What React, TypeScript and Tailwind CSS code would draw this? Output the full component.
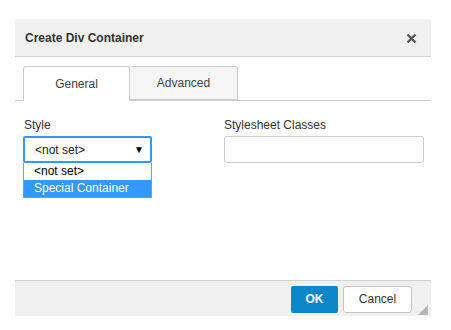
const font = { fontFamily: '"Liberation Sans", Arial, sans-serif' };

const App = () => {
  return (
    <div className="w-[451px] h-[330px] bg-white pt-[19px] pl-[15px]" style={font}>
      <section className="w-[416px] flex flex-col text-[#333]">
        <header className="h-[38px] bg-[#f0f0f0] border-b border-[#d1d1d1] flex items-center justify-between pl-[10px] pr-[14px]">
          <h2 className="text-[12px] font-bold text-[#333]">Create Div Container</h2>
          <svg width="11" height="11" viewBox="0 0 11 11" className="mt-[2px]">
            <path d="M1.5 1.5 L9.5 9.5 M9.5 1.5 L1.5 9.5" stroke="#555" strokeWidth="2.4" />
          </svg>
        </header>

        <div className="h-[223px] bg-white pt-[9px] flex flex-col">
          <div className="flex border-b border-[#ccc] pl-[8px] h-[35px]">
            <div className="w-[107px] h-[35px] border border-[#ccc] border-b-white rounded-t-[3px] bg-white flex items-center justify-center text-[12px] text-[#444]">
              General
            </div>
            <div className="w-[108px] h-[34px] border border-l-0 border-[#ccc] rounded-t-[3px] bg-[#f6f6f6] flex items-center justify-center text-[12px] text-[#444]">
              Advanced
            </div>
          </div>

          <div className="flex pl-[8px] pt-[17px]">
            <div className="w-[201px] flex flex-col">
              <label className="text-[12px] text-[#333] pl-[1px] leading-[14px]">Style</label>
              <div className="relative mt-[4px] w-[129px]">
                <div className="h-[27px] border-2 border-[#3399ff] rounded-[2px] flex items-center justify-between pl-[10px] pr-[6px] text-[12px] text-[#222]">
                  <span>&lt;not set&gt;</span>
                  <span className="text-[10px] text-black">▼</span>
                </div>
                <ul className="absolute left-0 top-[27px] w-[129px] border border-[#7f9db9] border-t-0 bg-white text-[12px] leading-[16px]">
                  <li className="pl-[10px] h-[17px] text-black">&lt;not set&gt;</li>
                  <li className="pl-[10px] h-[17px] bg-[#3399ff] text-white">Special Container</li>
                </ul>
              </div>
            </div>
            <div className="flex flex-col">
              <label className="text-[12px] text-[#333] leading-[14px]">Stylesheet Classes</label>
              <div className="mt-[4px] w-[200px] h-[27px] border border-[#ccc] rounded-[2px] bg-white" />
            </div>
          </div>
        </div>

        <footer className="relative h-[36px] bg-[#f0f0f0] border-t border-[#d1d1d1] flex items-center justify-end gap-[5px] pr-[19px] pt-[1px]">
          <button className="w-[47px] h-[27px] bg-[#0b87c9] rounded-[2px] text-white text-[12px] font-bold">OK</button>
          <button className="w-[69px] h-[27px] bg-white border border-[#c4c4c4] rounded-[3px] text-[#333] text-[12px]">Cancel</button>
          <svg width="10" height="10" viewBox="0 0 10 10" className="absolute right-[3px] bottom-[1px]">
            <polygon points="10,0 10,10 0,10" fill="#b5b5b5" />
          </svg>
        </footer>
      </section>
    </div>
  );
};

export default App;
